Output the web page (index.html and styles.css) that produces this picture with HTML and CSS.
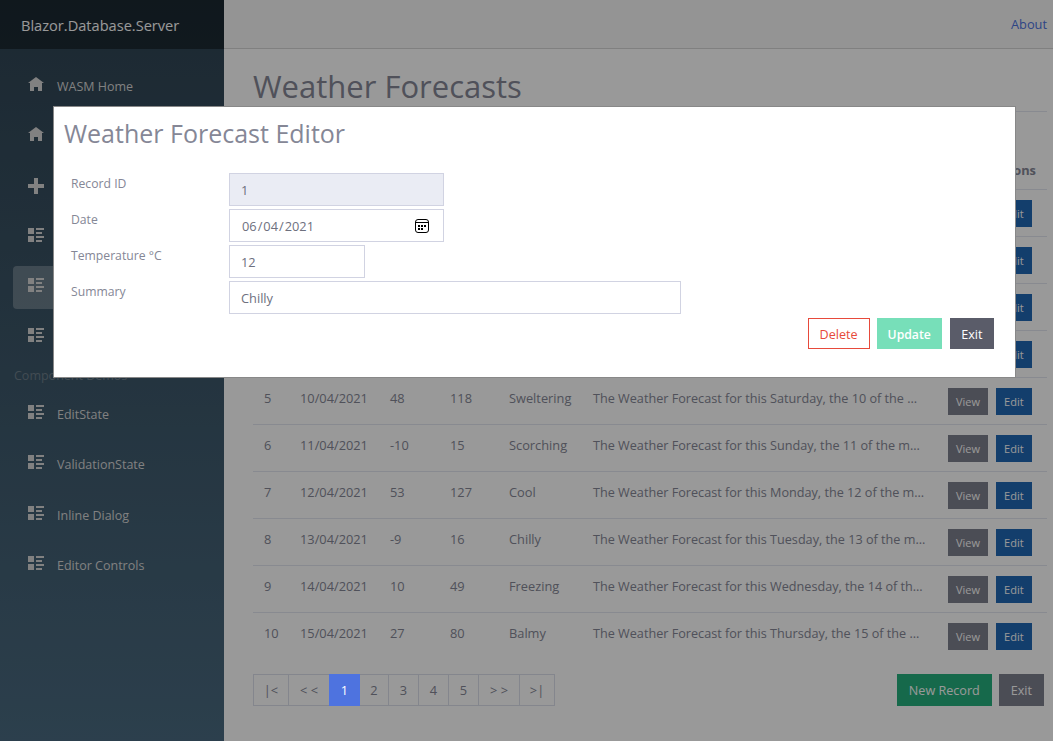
FILE: index.html
```html
<!DOCTYPE html>
<html lang="en">
<head>
    <meta charset="UTF-8">
    <meta name="viewport" content="width=device-width, initial-scale=1.0">
    <title>Blazor.Database.Server</title>
    <link rel="stylesheet" href="styles.css">
</head>
<body>

    <div class="page">
        <aside class="sidebar">
            <div class="brand">Blazor.Database.Server</div>
            <nav class="nav-list">
                <a class="nav-item" href="#"><svg class="nav-icon" viewBox="0 0 8 8"><path d="M4 0l-4 3h1v4h2v-2h2v2h2v-4.03l1 .03-4-3z"/></svg>WASM Home</a>
                <a class="nav-item" href="#"><svg class="nav-icon" viewBox="0 0 8 8"><path d="M4 0l-4 3h1v4h2v-2h2v2h2v-4.03l1 .03-4-3z"/></svg>Server Home</a>
                <a class="nav-item" href="#"><svg class="nav-icon" viewBox="0 0 8 8"><path d="M3 0v3h-3v2h3v3h2v-3h3v-2h-3v-3h-2z"/></svg>Counter</a>
                <a class="nav-item" href="#"><svg class="nav-icon" viewBox="0 0 8 8"><path d="M0 0v3h3v-3h-3zm4 0v1h4v-1h-4zm0 2v1h3v-1h-3zm-4 2v3h3v-3h-3zm4 0v1h4v-1h-4zm0 2v1h3v-1h-3z"/></svg>Weather</a>
                <a class="nav-item active" href="#"><svg class="nav-icon" viewBox="0 0 8 8"><path d="M0 0v3h3v-3h-3zm4 0v1h4v-1h-4zm0 2v1h3v-1h-3zm-4 2v3h3v-3h-3zm4 0v1h4v-1h-4zm0 2v1h3v-1h-3z"/></svg>Modal</a>
                <a class="nav-item" href="#"><svg class="nav-icon" viewBox="0 0 8 8"><path d="M0 0v3h3v-3h-3zm4 0v1h4v-1h-4zm0 2v1h3v-1h-3zm-4 2v3h3v-3h-3zm4 0v1h4v-1h-4zm0 2v1h3v-1h-3z"/></svg>Inline</a>
                <div class="nav-heading">Component Demos</div>
                <a class="nav-item" href="#"><svg class="nav-icon" viewBox="0 0 8 8"><path d="M0 0v3h3v-3h-3zm4 0v1h4v-1h-4zm0 2v1h3v-1h-3zm-4 2v3h3v-3h-3zm4 0v1h4v-1h-4zm0 2v1h3v-1h-3z"/></svg>EditState</a>
                <a class="nav-item" href="#"><svg class="nav-icon" viewBox="0 0 8 8"><path d="M0 0v3h3v-3h-3zm4 0v1h4v-1h-4zm0 2v1h3v-1h-3zm-4 2v3h3v-3h-3zm4 0v1h4v-1h-4zm0 2v1h3v-1h-3z"/></svg>ValidationState</a>
                <a class="nav-item" href="#"><svg class="nav-icon" viewBox="0 0 8 8"><path d="M0 0v3h3v-3h-3zm4 0v1h4v-1h-4zm0 2v1h3v-1h-3zm-4 2v3h3v-3h-3zm4 0v1h4v-1h-4zm0 2v1h3v-1h-3z"/></svg>Inline Dialog</a>
                <a class="nav-item" href="#"><svg class="nav-icon" viewBox="0 0 8 8"><path d="M0 0v3h3v-3h-3zm4 0v1h4v-1h-4zm0 2v1h3v-1h-3zm-4 2v3h3v-3h-3zm4 0v1h4v-1h-4zm0 2v1h3v-1h-3z"/></svg>Editor Controls</a>
            </nav>
        </aside>

        <main class="main">
            <div class="top-row"><a href="#">About</a></div>
            <div class="content">
                <h1>Weather Forecasts</h1>
                <table class="forecast-table">
                    <colgroup>
                        <col class="col-id"><col class="col-date"><col class="col-temp"><col class="col-temp-f"><col class="col-summary"><col class="col-desc"><col class="col-actions">
                    </colgroup>
                    <thead>
                        <tr><th>ID</th><th>Date</th><th>Temp. °C</th><th>Temp. °F</th><th>Summary</th><th>Description</th><th class="actions-head">Actions</th></tr>
                    </thead>
                    <tbody>
                        <tr><td>1</td><td>06/04/2021</td><td>12</td><td>53</td><td>Chilly</td><td class="desc">The Weather Forecast for this Tuesday, the 6 of the month is Chilly</td><td class="row-btns"><button class="btn btn-dark btn-sm">View</button><button class="btn btn-blue btn-sm">Edit</button></td></tr>
                        <tr><td>2</td><td>07/04/2021</td><td>31</td><td>87</td><td>Warm</td><td class="desc">The Weather Forecast for this Wednesday, the 7 of the month is Warm</td><td class="row-btns"><button class="btn btn-dark btn-sm">View</button><button class="btn btn-blue btn-sm">Edit</button></td></tr>
                        <tr><td>3</td><td>08/04/2021</td><td>4</td><td>39</td><td>Bracing</td><td class="desc">The Weather Forecast for this Thursday, the 8 of the month is Bracing</td><td class="row-btns"><button class="btn btn-dark btn-sm">View</button><button class="btn btn-blue btn-sm">Edit</button></td></tr>
                        <tr><td>4</td><td>09/04/2021</td><td>22</td><td>71</td><td>Mild</td><td class="desc">The Weather Forecast for this Friday, the 9 of the month is Mild</td><td class="row-btns"><button class="btn btn-dark btn-sm">View</button><button class="btn btn-blue btn-sm">Edit</button></td></tr>
                        <tr><td>5</td><td>10/04/2021</td><td>48</td><td>118</td><td>Sweltering</td><td class="desc">The Weather Forecast for this Saturday, the 10 of the month is Sweltering</td><td class="row-btns"><button class="btn btn-dark btn-sm">View</button><button class="btn btn-blue btn-sm">Edit</button></td></tr>
                        <tr><td>6</td><td>11/04/2021</td><td>-10</td><td>15</td><td>Scorching</td><td class="desc">The Weather Forecast for this Sunday, the 11 of the month is Scorching</td><td class="row-btns"><button class="btn btn-dark btn-sm">View</button><button class="btn btn-blue btn-sm">Edit</button></td></tr>
                        <tr><td>7</td><td>12/04/2021</td><td>53</td><td>127</td><td>Cool</td><td class="desc">The Weather Forecast for this Monday, the 12 of the month is Cool</td><td class="row-btns"><button class="btn btn-dark btn-sm">View</button><button class="btn btn-blue btn-sm">Edit</button></td></tr>
                        <tr><td>8</td><td>13/04/2021</td><td>-9</td><td>16</td><td>Chilly</td><td class="desc">The Weather Forecast for this Tuesday, the 13 of the month is Chilly</td><td class="row-btns"><button class="btn btn-dark btn-sm">View</button><button class="btn btn-blue btn-sm">Edit</button></td></tr>
                        <tr><td>9</td><td>14/04/2021</td><td>10</td><td>49</td><td>Freezing</td><td class="desc">The Weather Forecast for this Wednesday, the 14 of the month is Freezing</td><td class="row-btns"><button class="btn btn-dark btn-sm">View</button><button class="btn btn-blue btn-sm">Edit</button></td></tr>
                        <tr><td>10</td><td>15/04/2021</td><td>27</td><td>80</td><td>Balmy</td><td class="desc">The Weather Forecast for this Thursday, the 15 of the month is Balmy</td><td class="row-btns"><button class="btn btn-dark btn-sm">View</button><button class="btn btn-blue btn-sm">Edit</button></td></tr>
                    </tbody>
                </table>
                <div class="table-footer">
                    <ul class="pagination">
                        <li class="page-wide">|&lt;</li>
                        <li class="page-wider">&lt; &lt;</li>
                        <li class="page-active">1</li>
                        <li class="page-narrow">2</li>
                        <li>3</li>
                        <li>4</li>
                        <li>5</li>
                        <li class="page-wider">&gt; &gt;</li>
                        <li class="page-wide">&gt;|</li>
                    </ul>
                    <div class="footer-btns">
                        <button class="btn btn-green">New Record</button>
                        <button class="btn btn-dark">Exit</button>
                    </div>
                </div>
            </div>
        </main>
    </div>

    <div class="overlay"></div>

    <div class="modal">
        <h2>Weather Forecast Editor</h2>
        <form class="editor-form">
            <div class="form-row">
                <label for="recordId">Record ID</label>
                <input class="field field-md" type="text" id="recordId" value="1" disabled>
            </div>
            <div class="form-row">
                <label for="date">Date</label>
                <input class="field field-md" type="date" id="date" value="2021-06-04">
            </div>
            <div class="form-row">
                <label for="temp">Temperature °C</label>
                <input class="field field-sm" type="number" id="temp" value="12">
            </div>
            <div class="form-row">
                <label for="summary">Summary</label>
                <input class="field field-lg" type="text" id="summary" value="Chilly">
            </div>
        </form>
        <div class="modal-btns">
            <button class="btn btn-outline-red">Delete</button>
            <button class="btn btn-green-disabled" disabled>Update</button>
            <button class="btn btn-dark-solid">Exit</button>
        </div>
    </div>

</body>
</html>
```

FILE: styles.css
```css
* {
    box-sizing: border-box;
}

body {
    margin: 0;
    font-family: "Open Sans", Arial, sans-serif;
    font-size: 12.8px;
    color: #858796;
    overflow: hidden;
}

.page {
    display: flex;
    height: 741px;
}

/* sidebar */
.sidebar {
    width: 224px;
    flex-shrink: 0;
    background-image: linear-gradient(180deg, #2f4453 0%, #4a6a80 100%);
}

.brand {
    height: 49px;
    padding-left: 21px;
    line-height: 50px;
    font-size: 14.6px;
    color: #fff;
    background-color: rgba(0, 0, 0, 0.4);
}

.nav-list {
    padding: 16px 13px 0;
}

.nav-item {
    display: flex;
    align-items: center;
    height: 43px;
    margin-bottom: 7.3px;
    padding-left: 15px;
    font-size: 12.5px;
    color: #d7d7d7;
    text-decoration: none;
    border-radius: 4px;
}

.nav-item.active {
    background-color: rgba(255, 255, 255, 0.25);
}

.nav-icon {
    width: 16px;
    height: 16px;
    margin-right: 13px;
    margin-bottom: 3px;
    fill: #d7d7d7;
}

.nav-heading {
    height: 27px;
    margin-left: 1px;
    margin-top: -2px;
    margin-bottom: 1.4px;
    font-size: 12.5px;
    line-height: 22px;
    color: #6f7f8a;
}

/* main column */
.main {
    flex: 1;
    min-width: 0;
}

.top-row {
    display: flex;
    justify-content: flex-end;
    align-items: center;
    height: 49px;
    padding-right: 6px;
    background-color: #f7f7f7;
    border-bottom: 1px solid #d6d5d5;
}

.top-row a {
    color: #4e73df;
    text-decoration: none;
}

.content {
    padding: 0 6px 0 29px;
}

.content h1 {
    margin: 0;
    padding: 16px 0 2px;
    height: 63px;
    font-size: 31px;
    font-weight: 400;
    line-height: 42px;
    color: #858796;
    border-bottom: 1px solid #e3e6f0;
}

.forecast-table {
    width: 794px;
    margin-top: 36px;
    table-layout: fixed;
    border-collapse: collapse;
}

.col-id { width: 36px; }
.col-date { width: 90px; }
.col-temp { width: 60px; }
.col-temp-f { width: 59px; }
.col-summary { width: 84px; }
.col-desc { width: 355px; }
.col-actions { width: 110px; }

.forecast-table th {
    height: 41px;
    padding: 3px 11px 0;
    text-align: left;
    font-weight: 700;
    border-bottom: 1px solid #e3e6f0;
}

.forecast-table th.actions-head {
    text-align: right;
}

.forecast-table td {
    height: 47px;
    padding: 10px 11px 0;
    vertical-align: top;
    line-height: 20px;
    border-bottom: 1px solid #e3e6f0;
    white-space: nowrap;
}

.forecast-table tr:last-child td {
    border-bottom: none;
}

.forecast-table td.desc {
    padding-right: 10px;
    font-size: 12.65px;
    overflow: hidden;
    text-overflow: ellipsis;
}

.forecast-table td.row-btns {
    padding-top: 2px;
    vertical-align: middle;
}

.row-btns .btn + .btn {
    margin-left: 8px;
}

.table-footer {
    display: flex;
    justify-content: space-between;
    align-items: flex-start;
    margin-top: 15px;
}

.pagination {
    display: flex;
    margin: 0;
    padding: 0;
    list-style: none;
}

.pagination li {
    width: 31px;
    height: 32px;
    line-height: 30px;
    text-align: center;
    margin-left: -1px;
    border: 1px solid #dddfeb;
    color: #858796;
}

.pagination li:first-child {
    margin-left: 0;
}

.pagination .page-wide {
    width: 36px;
}

.pagination .page-wider {
    width: 42px;
}

.pagination .page-narrow {
    width: 30px;
}

/* the current page sits above the backdrop, as in the original */
.pagination .page-active {
    width: 31px;
    position: relative;
    z-index: 3;
    color: #fff;
    background-color: #4e73df;
    border-color: #4e73df;
}

.footer-btns {
    display: flex;
    gap: 7px;
    margin-right: 3px;
}

/* buttons */
.btn {
    height: 32px;
    padding: 0 11px;
    font-family: inherit;
    font-size: 12.6px;
    border: 1px solid transparent;
    border-radius: 0;
    cursor: pointer;
}

.btn-sm {
    height: 27px;
    padding: 0 7px;
    font-size: 11px;
}

.btn-dark {
    color: #fff;
    background-color: #7e808e;
}

.btn-dark-solid {
    color: #fff;
    background-color: #5a5c69;
}

.btn-blue {
    color: #fff;
    background-color: #2168b4;
}

.btn-green {
    color: #fff;
    background-color: #25b07e;
}

.btn-green-disabled {
    padding: 0 10px;
    font-size: 12.2px;
    color: #fff;
    background-color: #77dfb9;
    font-weight: 600;
}

.btn-outline-red {
    color: #e74a3b;
    background-color: #fff;
    border-color: #e74a3b;
}

/* overlay and dialog */
.overlay {
    position: fixed;
    inset: 0;
    z-index: 1;
    background-color: rgba(0, 0, 0, 0.4);
}

.modal {
    position: fixed;
    left: 53px;
    top: 106px;
    z-index: 4;
    width: 963px;
    height: 272px;
    padding: 9px 21px 0 10px;
    background-color: #fff;
    border: 1px solid #888;
}

.modal h2 {
    margin: 0;
    font-size: 25px;
    font-weight: 400;
    line-height: 34px;
}

.editor-form {
    margin-top: 23px;
}

.form-row {
    display: flex;
    align-items: flex-start;
    margin-bottom: 3px;
    padding-left: 7px;
}

.form-row label {
    width: 158px;
    flex-shrink: 0;
    padding-top: 2px;
    line-height: 17px;
    font-size: 12.2px;
}

.field {
    height: 33px;
    padding: 0 11px;
    font-family: inherit;
    font-size: 12.8px;
    color: #6e707e;
    background-color: #fff;
    border: 1px solid #d1d3e2;
    border-radius: 0;
    outline: none;
}

.field:disabled {
    background-color: #eaecf4;
}

.field::-webkit-calendar-picker-indicator {
    width: 14px;
    height: 14px;
    padding: 0;
    margin-right: 3px;
    background: url("data:image/svg+xml,%3Csvg xmlns='http://www.w3.org/2000/svg' viewBox='0 0 14 14'%3E%3Crect x='.5' y='.5' width='13' height='13' rx='2.5' fill='none' stroke='black'/%3E%3Cpath d='M1 3.5h12' stroke='black'/%3E%3Cpath d='M3 6h2v2H3zM6 6h2v2H6zM9 6h2v2H9zM3 9h2v2H3zM6 9h2v2H6z'/%3E%3C/svg%3E") no-repeat center;
}

.field-sm { width: 136px; }
.field-md { width: 215px; }
.field-lg { width: 452px; }

.modal-btns {
    display: flex;
    justify-content: flex-end;
    gap: 7px;
    margin-top: 4px;
}

.modal-btns .btn {
    height: 31px;
    padding-top: 2px;
}

.modal-btns .btn-dark-solid {
    margin-left: 1px;
    padding-left: 10.5px;
    padding-right: 10.5px;
}
```
